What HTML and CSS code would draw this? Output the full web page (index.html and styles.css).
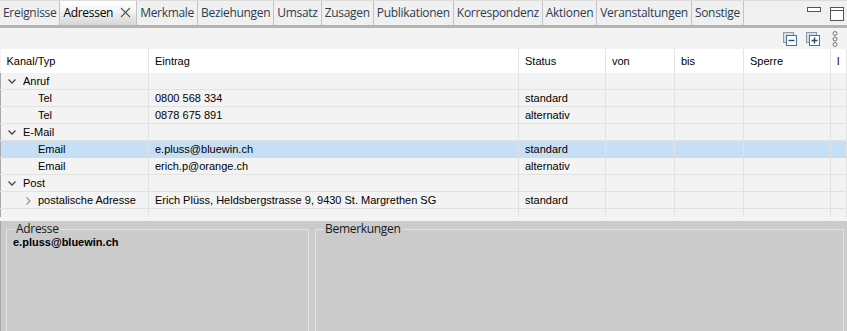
FILE: index.html
```html
<!DOCTYPE html>
<html lang="de">
    <head>
        <title>Adressen</title>
        <meta charset="utf-8">
        <link rel="stylesheet" href="styles.css">
    </head>
    <body>
        <div class="window">
            <div class="tabbar">
                <div class="tab">Ereignisse</div>
                <div class="tab active">Adressen
                    <svg class="close" width="11" height="11" viewBox="0 0 11 11"><path d="M1 1L10 10M10 1L1 10" stroke="#555" stroke-width="1.1" fill="none"/></svg>
                </div>
                <div class="tab">Merkmale</div>
                <div class="tab">Beziehungen</div>
                <div class="tab">Umsatz</div>
                <div class="tab">Zusagen</div>
                <div class="tab">Publikationen</div>
                <div class="tab">Korrespondenz</div>
                <div class="tab">Aktionen</div>
                <div class="tab">Veranstaltungen</div>
                <div class="tab">Sonstige</div>
                <div class="winbtns">
                    <svg width="14" height="5" viewBox="0 0 14 5"><rect x="0.5" y="0.5" width="13" height="4" fill="#fff" stroke="#555"/></svg>
                    <svg width="14" height="14" viewBox="0 0 14 14"><rect x="0.5" y="0.5" width="13" height="13" fill="#fff" stroke="#555"/><path d="M1 3.5H13" stroke="#555"/></svg>
                </div>
            </div>
            <div class="toolbar">
                <svg width="14" height="14" viewBox="0 0 14 14"><rect x="0.5" y="0.5" width="10" height="10" fill="#d5dde6" stroke="#8a9bb0"/><rect x="3.5" y="3.5" width="10" height="10" fill="#fff" stroke="#50708f"/><path d="M5.5 8.5H11.5" stroke="#1f4f80" stroke-width="1.4"/></svg>
                <svg width="14" height="14" viewBox="0 0 14 14"><rect x="0.5" y="0.5" width="10" height="10" fill="#d5dde6" stroke="#8a9bb0"/><rect x="3.5" y="3.5" width="10" height="10" fill="#fff" stroke="#50708f"/><path d="M5.5 8.5H11.5M8.5 5.5V11.5" stroke="#1f4f80" stroke-width="1.4"/></svg>
                <svg class="menu" width="6" height="16" viewBox="0 0 6 16"><circle cx="3" cy="2.5" r="2" fill="none" stroke="#777"/><circle cx="3" cy="8" r="2" fill="none" stroke="#777"/><circle cx="3" cy="13.5" r="2" fill="none" stroke="#777"/></svg>
            </div>
            <table class="tree">
                <colgroup>
                    <col class="c1"><col class="c2"><col class="c3"><col class="c4"><col class="c5"><col class="c6"><col>
                </colgroup>
                <thead>
                    <tr><th>Kanal/Typ</th><th>Eintrag</th><th>Status</th><th>von</th><th>bis</th><th>Sperre</th><th>l</th></tr>
                </thead>
                <tbody>
                    <tr><td class="group"><svg class="chev" width="8" height="5" viewBox="0 0 8 5"><path d="M0.5 0.5L4 4L7.5 0.5" stroke="#444" stroke-width="1.3" fill="none"/></svg>Anruf</td><td></td><td></td><td></td><td></td><td></td><td></td></tr>
                    <tr><td class="leaf">Tel</td><td>0800 568 334</td><td>standard</td><td></td><td></td><td></td><td></td></tr>
                    <tr><td class="leaf">Tel</td><td>0878 675 891</td><td>alternativ</td><td></td><td></td><td></td><td></td></tr>
                    <tr><td class="group"><svg class="chev" width="8" height="5" viewBox="0 0 8 5"><path d="M0.5 0.5L4 4L7.5 0.5" stroke="#444" stroke-width="1.3" fill="none"/></svg>E-Mail</td><td></td><td></td><td></td><td></td><td></td><td></td></tr>
                    <tr class="selected"><td class="leaf">Email</td><td>e.pluss@bluewin.ch</td><td>standard</td><td></td><td></td><td></td><td></td></tr>
                    <tr><td class="leaf">Email</td><td>erich.p@orange.ch</td><td>alternativ</td><td></td><td></td><td></td><td></td></tr>
                    <tr><td class="group"><svg class="chev" width="8" height="5" viewBox="0 0 8 5"><path d="M0.5 0.5L4 4L7.5 0.5" stroke="#444" stroke-width="1.3" fill="none"/></svg>Post</td><td></td><td></td><td></td><td></td><td></td><td></td></tr>
                    <tr><td class="leaf"><svg class="arrow" width="5" height="8" viewBox="0 0 5 8"><path d="M0.5 0.5L4 4L0.5 7.5" stroke="#999" stroke-width="1.3" fill="none"/></svg>postalische Adresse</td><td>Erich Plüss, Heldsbergstrasse 9, 9430 St. Margrethen SG</td><td>standard</td><td></td><td></td><td></td><td></td></tr>
                    <tr class="empty"><td></td><td></td><td></td><td></td><td></td><td></td><td></td></tr>
                </tbody>
            </table>
            <div class="details">
                <fieldset class="box address">
                    <legend>Adresse</legend>
                    <b>e.pluss@bluewin.ch</b>
                </fieldset>
                <fieldset class="box notes">
                    <legend>Bemerkungen</legend>
                </fieldset>
            </div>
        </div>
    </body>
</html>
```

FILE: styles.css
```css
body {
    margin: 0;
    overflow: hidden;
    background: #f4f4f4;
}
.window {
    width: 847px;
    height: 331px;
    display: flex;
    flex-direction: column;
    font: 11px "Liberation Sans", Arial, sans-serif;
    color: #000;
}
.tabbar {
    display: flex;
    height: 24px;
    background: #f0f0f0;
    border-top: 1px solid #dcdcdc;
    border-bottom: 3px solid #b4b4b4;
    box-sizing: content-box;
}
.tab {
    display: flex;
    align-items: center;
    gap: 7px;
    padding: 0 3px 1px 3px;
    font: 12px "Open Sans", "Noto Sans", sans-serif;
    letter-spacing: -0.3px;
    color: #2c3d50;
    border-right: 1px solid #c4c4c4;
}
.tab.active {
    color: #000;
    background: linear-gradient(#ffffff, #f4f4f4 40%, #d6d6d6);
    padding-right: 5px;
}
.winbtns {
    margin-left: auto;
    display: flex;
    align-items: flex-start;
    gap: 9px;
    padding: 6px 3px 0 0;
}
.toolbar {
    height: 21px;
    display: flex;
    justify-content: flex-end;
    align-items: center;
    gap: 9px;
    padding: 0 9px 0 0;
    background: #f3f3f3;
}
.toolbar .menu {
    margin-left: 3px;
}
.tree {
    border-collapse: collapse;
    table-layout: fixed;
    width: 847px;
    background: #f3f3f3;
}
.c1 { width: 148px; }
.c2 { width: 370px; }
.c3 { width: 87px; }
.c4 { width: 69px; }
.c5 { width: 69px; }
.c6 { width: 87px; }
.tree th {
    height: 24px;
    padding: 0 6px;
    background: #fff;
    font-weight: normal;
    text-align: left;
    border-right: 1px solid #e4e4e4;
}
.tree td {
    height: 16px;
    padding: 0 6px;
    white-space: nowrap;
    overflow: hidden;
    border-right: 1px solid #e2e2e2;
    border-bottom: 1px solid #e2e2e2;
}
.tree tbody td:first-child {
    border-left: 1px solid #a8a8a8;
}
.tree td.group {
    padding-left: 7px;
}
.chev {
    margin: 0 7px 1px 0;
    vertical-align: middle;
}
.tree td.leaf {
    padding-left: 37px;
    position: relative;
}
.arrow {
    position: absolute;
    left: 25px;
    top: 5px;
}
.tree tr.selected td {
    background: #c6dff4;
    border-bottom-color: #c6dff4;
}
.tree tr.empty td {
    height: 8px;
    border-bottom: none;
}
.details {
    flex: 1;
    display: flex;
    gap: 6px;
    margin-top: 4px;
    padding: 0 3px 0 5px;
    background: #cbcbcb;
    border-left: 1px solid #a8a8a8;
}
.box {
    margin: 0;
    padding: 0 6px;
    border: 1px solid #e2e2e2;
    border-bottom: none;
    font: 11px "Liberation Sans", Arial, sans-serif;
}
.box legend {
    padding: 0 1px;
    margin-left: 2px;
    font: 12px/16px "Open Sans", "Noto Sans", sans-serif;
    letter-spacing: -0.3px;
    color: #1a1a1a;
}
.box b {
    display: block;
    margin-top: -1px;
}
.address {
    width: 303px;
    box-sizing: border-box;
}
.notes {
    flex: 1;
}
```
